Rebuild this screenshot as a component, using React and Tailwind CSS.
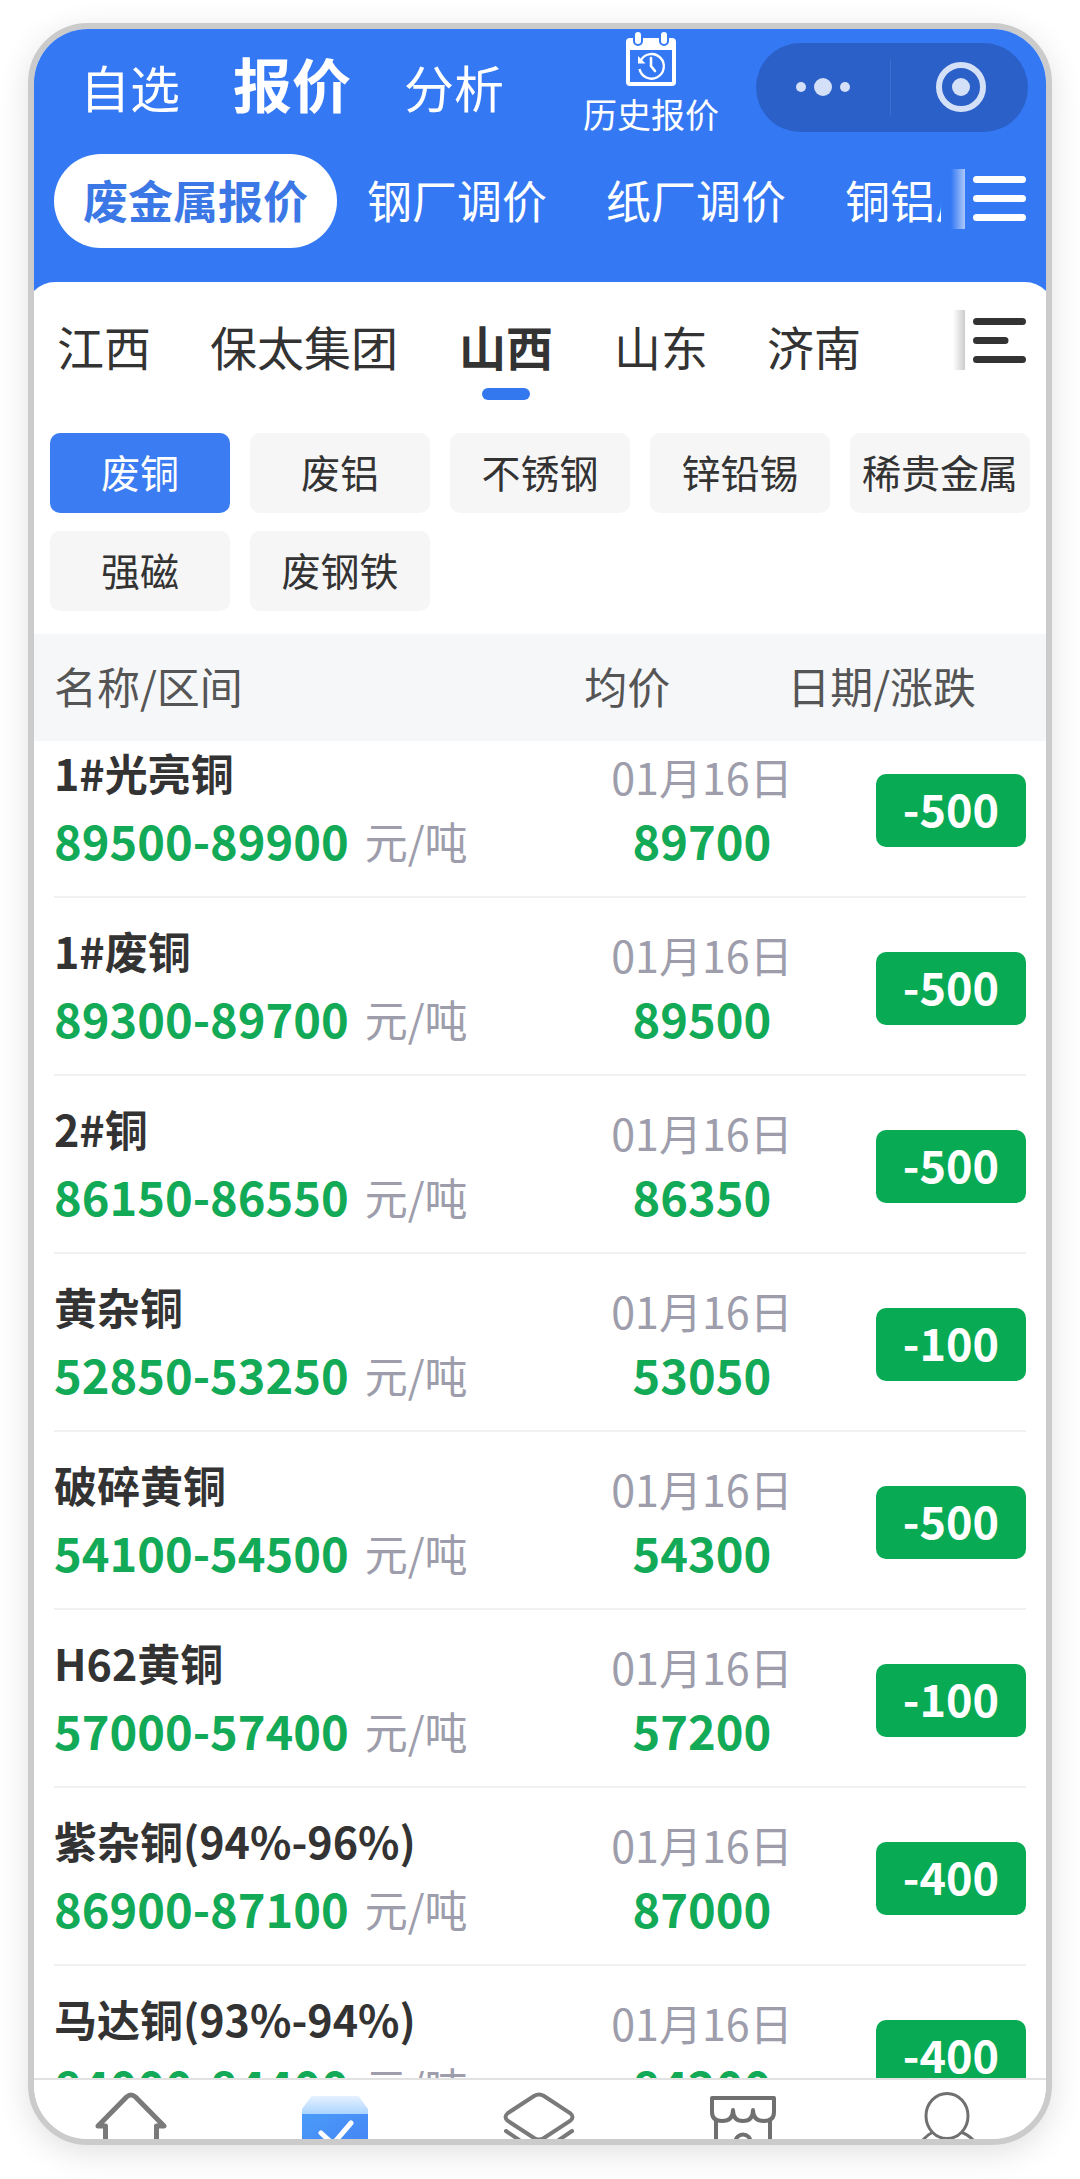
import React, { useState } from "react";

const topTabs = ["自选", "报价", "分析"];
const priceTabs = ["废金属报价", "钢厂调价", "纸厂调价", "铜铝厂调价"];
const regions = ["江西", "保太集团", "山西", "山东", "济南"];
const metals = ["废铜", "废铝", "不锈钢", "锌铅锡", "稀贵金属", "强磁", "废钢铁"];

const quotes = [
  { name: "1#光亮铜", range: "89500-89900", avg: "89700", change: "-500" },
  { name: "1#废铜", range: "89300-89700", avg: "89500", change: "-500" },
  { name: "2#铜", range: "86150-86550", avg: "86350", change: "-500" },
  { name: "黄杂铜", range: "52850-53250", avg: "53050", change: "-100" },
  { name: "破碎黄铜", range: "54100-54500", avg: "54300", change: "-500" },
  { name: "H62黄铜", range: "57000-57400", avg: "57200", change: "-100" },
  { name: "紫杂铜(94%-96%)", range: "86900-87100", avg: "87000", change: "-400" },
  { name: "马达铜(93%-94%)", range: "84000-84400", avg: "84200", change: "-400" },
];

const HistoryIcon = () => (
  <svg className="w-[50px] h-[54px]" viewBox="0 0 50 54" fill="none">
    <path d="M4 6H46Q50 6 50 10V50Q50 54 46 54H4Q0 54 0 50V10Q0 6 4 6ZM4 18V50H46V18Z" fill="#fff" fillRule="evenodd" />
    <rect x="8" y="-1" width="8" height="14" rx="4" fill="#fff" stroke="#3478f4" strokeWidth="2" />
    <rect x="34" y="-1" width="8" height="14" rx="4" fill="#fff" stroke="#3478f4" strokeWidth="2" />
    <path d="M15 28A12.3 12.3 0 1 1 13.5 37" stroke="#fff" strokeWidth="2.4" />
    <path d="M12 24V31.5H19.5Z" fill="#fff" />
    <path d="M25 26V34L29 39" stroke="#fff" strokeWidth="2.6" strokeLinecap="round" />
  </svg>
);

const MenuLines = ({ short = false }) => (
  <svg className="w-[53px] h-[45px]" viewBox="0 0 53 45" stroke="currentColor" strokeWidth="7" strokeLinecap="round">
    <path d={short ? "M3.5 3.5H49.5M3.5 22.5H32M3.5 41.5H49.5" : "M3.5 3.5H49.5M3.5 22.5H49.5M3.5 41.5H49.5"} />
  </svg>
);

const navIcons = [
  {
    label: "首页",
    art: <path d="M24.5 64V48H17L45.5 19Q50 15 54.5 19L83 48H75.5V64" stroke="#7a7a7a" strokeWidth="5" strokeLinejoin="round" />,
  },
  {
    label: "报价",
    art: (
      <>
        <defs>
          <linearGradient id="calTop" x1="0" y1="0" x2="0" y2="1">
            <stop stopColor="#e6f1ff" />
            <stop offset="1" stopColor="#a8d3ff" />
          </linearGradient>
          <linearGradient id="calBody" x1="0" y1="0" x2="1" y2="1">
            <stop stopColor="#4a9cf9" />
            <stop offset="1" stopColor="#4583f5" />
          </linearGradient>
        </defs>
        <path d="M28 18H72Q74 18 75 20L83 31V37H17V31L25 20Q26 18 28 18Z" fill="url(#calTop)" />
        <path d="M17 36H83V70H17Z" fill="url(#calBody)" />
        <path d="M36 55L48 66L66 45" stroke="#fff" strokeWidth="5" strokeLinecap="round" />
      </>
    ),
  },
  {
    label: "分类",
    art: (
      <>
        <path d="M19 35L45 18Q50 15 55 18L81 35Q86 39 81 43L55 60Q50 63 45 60L19 43Q14 39 19 35Z" stroke="#7a7a7a" strokeWidth="4" />
        <path d="M17 53L36 66M83 53L64 66" stroke="#7a7a7a" strokeWidth="4" strokeLinecap="round" />
      </>
    ),
  },
  {
    label: "店铺",
    art: (
      <g stroke="#707070" strokeWidth="4">
        <path d="M19 20H81V34Q81 43 71 43Q60 43 60 32Q60 43 50 43Q40 43 40 32Q40 43 29 43Q19 43 19 34Z" strokeLinejoin="round" />
        <path d="M23 42V64M77 42V64M42.5 64A7.5 7.5 0 1 1 57.5 64" />
      </g>
    ),
  },
  {
    label: "我的",
    art: (
      <g stroke="#707070" strokeWidth="3">
        <ellipse cx="50" cy="38" rx="21" ry="22.5" />
        <path d="M36 54Q30 57 24 64M64 54Q72 57 78 64" />
      </g>
    ),
  },
];

const QuoteRow = ({ quote, index }) => {
  // the list is scrolled a little, so the first row starts under the header
  const cell = `flex flex-col border-b-2 border-[#eff1f2] ${index === 0 ? "h-[157px] pt-px" : "h-[178px] pt-[22px]"}`;

  return (
    <tr>
      <td className="p-0 pl-5">
        <div className={cell}>
          <div className="text-[43px] leading-[60px] font-bold text-[#333]">{quote.name}</div>
          <div className="flex items-center gap-4 leading-[76px]">
            <span className="text-[47px] font-bold text-[#12a957]">{quote.range}</span>
            <span className="text-[43px] text-[#9d9dab]">元/吨</span>
          </div>
        </div>
      </td>
      <td className="p-0 text-center">
        <div className={cell}>
          <div className="text-[43px] leading-[60px] pt-1 text-[#9d9dab]">01月16日</div>
          <div className="text-[47px] leading-[68px] font-bold text-[#12a957]">{quote.avg}</div>
        </div>
      </td>
      <td className="p-0 pr-5">
        <div className={`${cell} items-end`}>
          <span className="mt-8 flex h-[73px] w-[150px] items-center justify-center rounded-[10px] bg-[#08ab54] pb-[6px] text-[45px] leading-[60px] font-bold text-white">
            {quote.change}
          </span>
        </div>
      </td>
    </tr>
  );
};

export default function App() {
  const [topTab, setTopTab] = useState("报价");
  const [priceTab, setPriceTab] = useState("废金属报价");
  const [region, setRegion] = useState("山西");
  const [metal, setMetal] = useState("废铜");

  return (
    <div className="h-screen bg-white px-7 pt-[23px] pb-[34px] font-['Noto_Sans_CJK_SC',sans-serif]">
      <div className="flex h-full flex-col overflow-hidden rounded-[60px] border-6 border-[#cbcbcb] bg-white shadow-[0_8px_32px_rgba(0,0,0,0.12)]">
        <header className="shrink-0 bg-[#3478f4] pb-[34px] text-white">
          <div className="flex h-[116px] items-center pl-[46px] pr-[18px]">
            <div className="flex items-baseline gap-[53px] pb-[6px]">
              {topTabs.map((tab) => (
                <button
                  key={tab}
                  onClick={() => setTopTab(tab)}
                  className={`whitespace-nowrap ${tab === topTab ? "text-[59px] leading-[80px] font-bold" : "text-[50px] leading-[80px]"}`}
                >
                  {tab}
                </button>
              ))}
            </div>
            <button className="ml-auto flex flex-col items-center gap-2 pb-2">
              <HistoryIcon />
              <span className="text-[34px] leading-[40px] whitespace-nowrap">历史报价</span>
            </button>
            <div className="ml-[37px] flex h-[89px] w-[272px] items-center rounded-full bg-[#2a60c8]">
              <button aria-label="更多" className="flex flex-1 justify-center">
                <svg className="w-[54px] h-[18px]" viewBox="0 0 54 18" fill="#d4e0f7">
                  <circle cx="5" cy="9" r="5" />
                  <circle cx="27" cy="9" r="9" />
                  <circle cx="49" cy="9" r="5" />
                </svg>
              </button>
              <span className="h-14 w-px bg-[#3c6fd0]" />
              <button aria-label="关闭" className="flex flex-1 justify-center pl-1">
                <svg className="w-[52px] h-[52px]" viewBox="0 0 52 52">
                  <circle cx="26" cy="26" r="22" fill="none" stroke="#d4e0f7" strokeWidth="6" />
                  <circle cx="26" cy="26" r="9" fill="#d4e0f7" />
                </svg>
              </button>
            </div>
          </div>

          <div className="mt-[9px] flex items-center pl-5 pr-5">
            <div className="flex min-w-0 flex-1 gap-px overflow-hidden">
              {priceTabs.map((tab) => (
                <button
                  key={tab}
                  onClick={() => setPriceTab(tab)}
                  className={`h-[94px] shrink-0 rounded-full px-[29px] pb-[2px] text-[45px] ${tab === priceTab ? "bg-white font-bold text-[#3b78e6]" : ""}`}
                >
                  {tab}
                </button>
              ))}
            </div>
            <span className="mb-1 ml-[10px] mr-2 h-[60px] w-[14px] bg-linear-to-r from-white/0 to-white/60" />
            <button aria-label="全部报价" className="pb-[6px]">
              <MenuLines />
            </button>
          </div>
        </header>

        <section className="shrink-0 bg-[#3478f4]">
          {/* wider than the screen, so only part of the corner shows */}
          <div className="-mx-2 rounded-t-[29px] bg-white px-2">
            <div className="flex h-[151px] items-start pl-[23px] pr-5 pt-[26px]">
              <div className="flex min-w-0 flex-1 gap-[59px] overflow-hidden">
                {regions.map((item) => (
                  <button
                    key={item}
                    onClick={() => setRegion(item)}
                    className={`flex shrink-0 flex-col items-center text-[47px] leading-[76px] text-[#333] ${item === region ? "px-[2px] font-bold" : ""}`}
                  >
                    {item}
                    {item === region && <span className="mt-1 h-3 w-12 rounded-full bg-[#3478f0]" />}
                  </button>
                ))}
              </div>
              <span className="mt-[2px] mr-2 h-[60px] w-3 bg-linear-to-r from-black/0 to-black/20" />
              <button aria-label="全部地区" className="pt-[10px] text-[#333]">
                <MenuLines short />
              </button>
            </div>

            <div className="grid grid-cols-5 gap-x-5 gap-y-[18px] px-4 pb-[23px]">
              {metals.map((item) => (
                <button
                  key={item}
                  onClick={() => setMetal(item)}
                  className={`h-20 rounded-[10px] pb-1 text-[39px] whitespace-nowrap ${item === metal ? "bg-[#3c7cf3] text-white" : "bg-[#f6f6f6] text-[#333]"}`}
                >
                  {item}
                </button>
              ))}
            </div>
          </div>
        </section>

        <main className="min-h-0 flex-1 overflow-hidden">
          <table className="w-full table-fixed border-collapse">
            <colgroup>
              <col className="w-[53%]" />
              <col className="w-[26%]" />
              <col />
            </colgroup>
            <thead className="bg-[#f6f7f9] text-[43px] text-[#555]">
              <tr className="h-[107px]">
                <th className="p-0 pl-5 pb-1 text-left font-normal">名称/区间</th>
                <th className="p-0 pl-[14px] pb-1 text-left font-normal">均价</th>
                <th className="p-0 pr-[70px] pb-1 text-right font-normal whitespace-nowrap">
                  <span className="float-right">日期/涨跌</span>
                </th>
              </tr>
            </thead>
            <tbody>
              {quotes.map((quote, i) => (
                <QuoteRow key={quote.name} quote={quote} index={i} />
              ))}
            </tbody>
          </table>
        </main>

        <nav className="-mx-1 grid h-[61px] shrink-0 grid-cols-5 overflow-hidden border-t-2 border-[#e2e2e2] bg-white">
          {navIcons.map((item) => (
            <a key={item.label} href="#" aria-label={item.label} className="flex justify-center">
              <svg className="w-[100px] h-[61px]" viewBox="1 2 100 61" fill="none">
                {item.art}
              </svg>
            </a>
          ))}
        </nav>
      </div>
    </div>
  );
}
